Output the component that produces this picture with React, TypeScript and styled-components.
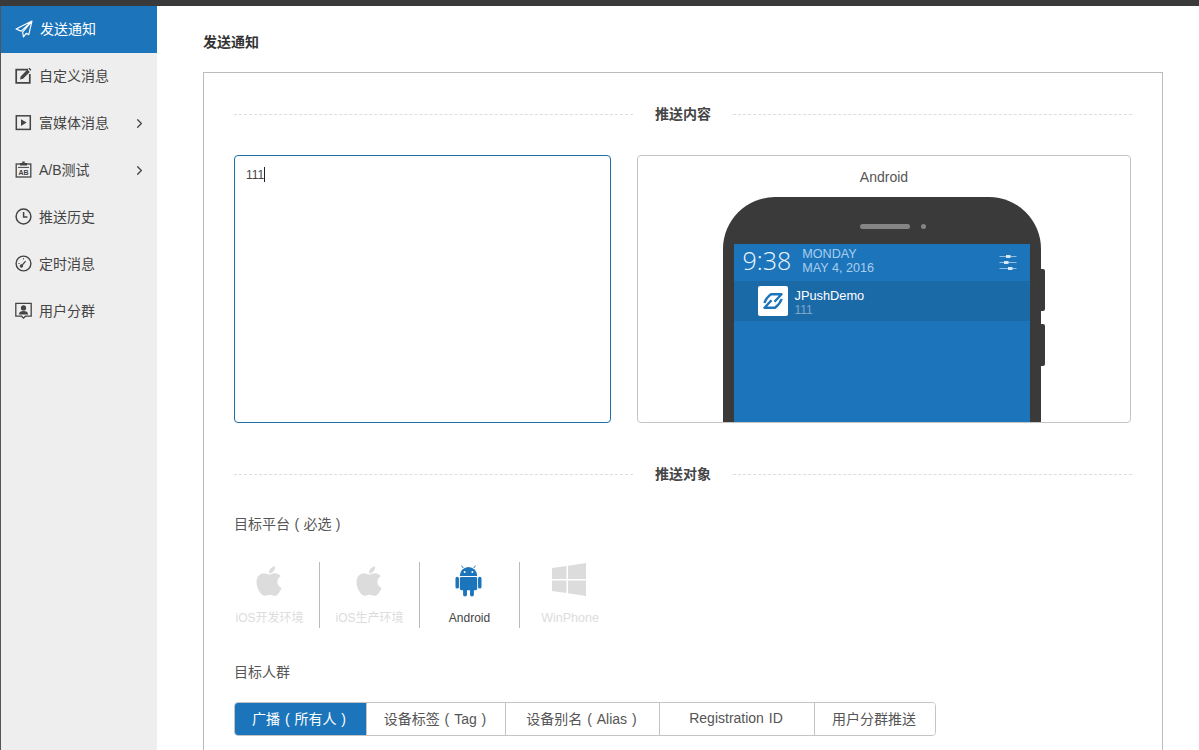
import styled, { createGlobalStyle } from "styled-components";
import { ChevronRight } from "lucide-react";
import { FaApple } from "react-icons/fa";
import type { ReactNode } from "react";

const GlobalStyle = createGlobalStyle`
  html, body {
    margin: 0;
    padding: 0;
    height: 100%;
    overflow: hidden;
    background: #fff;
  }
  body {
    font-family: "Liberation Sans", "Noto Sans CJK SC", Arial, sans-serif;
    color: #444;
  }
  * { box-sizing: border-box; }
`;

const Page = styled.div`
  height: 750px;
  overflow: hidden;
  display: flex;
  flex-direction: column;
`;

const TopBar = styled.div`
  height: 6px;
  flex: none;
  background: #3a3a3a;
`;

const Body = styled.div`
  flex: 1;
  display: flex;
  min-height: 0;
`;

const Sidebar = styled.nav`
  width: 157px;
  flex: none;
  background: #eeeeee;
  border-left: 1px solid #555;
`;

const NavItem = styled.div<{ $active?: boolean }>`
  height: 47px;
  display: flex;
  align-items: center;
  padding: 0 0 2px 14px;
  font-size: 14px;
  color: ${(p) => (p.$active ? "#fff" : "#444")};
  background: ${(p) => (p.$active ? "#1c75bb" : "transparent")};
  svg { flex: none; }
`;

const NavLabel = styled.span`
  margin: 0 0 2px 7px;
  flex: 1;
  white-space: nowrap;
`;

const NavArrow = styled(ChevronRight)`
  margin: 2px 10px 0 0;
  color: #444;
`;

const Main = styled.main`
  flex: 1;
  padding-left: 46px;
  min-width: 0;
`;

const PageTitle = styled.h1`
  margin: 0;
  height: 66px;
  display: flex;
  align-items: center;
  padding-top: 4px;
  font-size: 14px;
  font-weight: bold;
  color: #333;
`;

const Card = styled.section`
  width: 960px;
  border: 1px solid #bbb;
  padding: 31px 30px 40px;
`;

const Divider = styled.div<{ $gapTop?: number }>`
  height: 20px;
  display: flex;
  align-items: center;
  margin-top: ${(p) => p.$gapTop ?? 0}px;
  font-size: 14px;
  font-weight: bold;
  color: #444;
  &::before, &::after {
    content: "";
    flex: 1;
    border-top: 1px dashed #ddd;
  }
  span { padding: 0 22px; margin-bottom: 2px; }
`;

const ContentRow = styled.div`
  display: grid;
  grid-template-columns: 377px 494px;
  gap: 26px;
  margin-top: 31px;
  height: 268px;
`;

const MessageBox = styled.div`
  border: 1px solid #1c6ea4;
  border-radius: 4px;
  padding: 11px 11px;
  font-size: 12px;
  line-height: 16px;
  color: #444;
`;

const Caret = styled.span`
  display: inline-block;
  width: 1px;
  height: 15px;
  background: #222;
  vertical-align: -3px;
`;

const Preview = styled.div`
  border: 1px solid #c4c4c4;
  border-radius: 4px;
  overflow: hidden;
  display: flex;
  flex-direction: column;
  align-items: center;
`;

const PreviewTitle = styled.div`
  height: 41px;
  flex: none;
  display: flex;
  align-items: center;
  font-size: 14px;
  color: #555;
`;

const Phone = styled.div`
  position: relative;
  width: 318px;
  height: 240px;
  flex: none;
  padding: 0 11px;
  background: #3a3a3a;
  border-radius: 52px 52px 0 0;
  margin-right: 5px;
`;

const SideKey = styled.div<{ $top: number }>`
  position: absolute;
  right: -4px;
  top: ${(p) => p.$top}px;
  width: 4px;
  height: 42px;
  background: #3a3a3a;
  border-radius: 0 2px 2px 0;
`;

const PhoneHead = styled.div`
  height: 47px;
  display: flex;
  align-items: center;
  justify-content: center;
  gap: 11px;
  padding: 12px 0 0 13px;
  margin-left: 10px;
`;

const Speaker = styled.div`
  width: 50px;
  height: 5px;
  border-radius: 3px;
  background: #858585;
`;

const Camera = styled.div`
  width: 5px;
  height: 5px;
  border-radius: 50%;
  background: #858585;
`;

const Screen = styled.div`
  height: 193px;
  background: #1c75bb;
`;

const StatusBar = styled.div`
  height: 37px;
  display: flex;
  align-items: center;
  padding: 0 13px 0 9px;
`;

const Clock = styled.div`
  font-size: 25px;
  line-height: 1;
  margin-bottom: 4px;
  color: #eef5fb;
  font-family: "Open Sans", "Liberation Sans", sans-serif;
  font-weight: 300;
`;

const DateText = styled.div`
  margin: 0 0 4px 11px;
  flex: 1;
  font-size: 12.6px;
  line-height: 14px;
  color: #a8cdec;
`;

const Notice = styled.div`
  height: 40px;
  display: flex;
  align-items: center;
  padding-left: 24px;
  background: #1b6aa8;
`;

const AppLogo = styled.div`
  width: 30px;
  height: 30px;
  background: #fff;
  border-radius: 2px;
  display: flex;
  align-items: center;
  justify-content: center;
`;

const NoticeText = styled.div`
  margin-left: 7px;
  padding-top: 4px;
`;

const NoticeTitle = styled.div`
  font-size: 12.8px;
  line-height: 14px;
  color: #fff;
`;

const NoticeBody = styled.div`
  font-size: 12px;
  line-height: 13px;
  margin-top: 1px;
  color: #7ea7c8;
`;

const FieldLabel = styled.div<{ $top: number }>`
  height: 20px;
  line-height: 20px;
  margin-top: ${(p) => p.$top}px;
  font-size: 14px;
  word-spacing: 0.5px;
  white-space: pre;
  color: #555;
`;

const Platforms = styled.div`
  display: flex;
  margin: 28px 0 0 -14px;
  height: 66px;
`;

const Platform = styled.div<{ $on?: boolean }>`
  width: 100px;
  height: 66px;
  display: flex;
  flex-direction: column;
  align-items: center;
  border-right: 1px solid #bbb;
  font-size: 12px;
  white-space: nowrap;
  color: ${(p) => (p.$on ? "#444" : "#dcdcdc")};
  &:last-child { border-right: none; }
`;

const PlatformIcon = styled.div`
  height: 40px;
  display: flex;
  align-items: center;
  justify-content: center;
  padding: 0 2px 3px 0;
`;

const PlatformName = styled.div<{ $low?: boolean }>`
  margin-top: ${(p) => (p.$low ? 8 : 6)}px;
  line-height: 20px;
  font-size: ${(p) => (p.$low ? 12.5 : 12)}px;
`;

const TargetGroup = styled.div`
  display: inline-grid;
  grid-template-columns: 131px 139px 154px 155px 121px;
  height: 34px;
  margin-top: 20px;
  border: 1px solid #c4c4c4;
  border-radius: 4px;
  overflow: hidden;
`;

const TargetButton = styled.div<{ $active?: boolean }>`
  display: flex;
  align-items: center;
  justify-content: center;
  padding: 0 2px 2px 0;
  font-size: 14px;
  word-spacing: 1px;
  white-space: pre;
  color: ${(p) => (p.$active ? "#fff" : "#555")};
  background: ${(p) => (p.$active ? "#1c75bb" : "#fff")};
  border-left: ${(p) => (p.$active ? "none" : "1px solid #c4c4c4")};
  &:first-child { border-left: none; margin: -1px 0 -1px -1px; }
`;

const SendIcon = () => (
  <svg width="18" height="18" viewBox="0 0 17 17" fill="none" stroke="currentColor" strokeWidth="1.1" strokeLinejoin="round">
    <path d="M16 1 1 8.5l4.8 2L16 1 7.2 11.4 8 16l2.6-3.4 2.4 1.2z" />
  </svg>
);

const EditIcon = () => (
  <svg width="17" height="17" viewBox="0 0 17 17" fill="none">
    <path d="M13 2.6H1.2v13.2h13.6V7" stroke="#444" strokeWidth="1.7" />
    <path d="M5 12.4 5.7 9.4 12.4 2.6l2.4 2.4-6.8 6.8z" fill="#444" />
    <path d="M13.3 1.7 14.4.7l2 2-1 1.1z" fill="#444" />
  </svg>
);

const PlayIcon = () => (
  <svg width="17" height="17" viewBox="0 0 17 17" fill="none">
    <rect x="1.3" y="1.8" width="14" height="13.6" stroke="#444" strokeWidth="1.5" />
    <path d="M6 5.2v6.8l5.6-3.4z" fill="#444" />
  </svg>
);

const AbIcon = () => (
  <svg width="17" height="17" viewBox="0 0 17 17" fill="none">
    <rect x="1.2" y="3" width="14.6" height="13" stroke="#444" strokeWidth="1.3" />
    <path d="M5 4.4V2h2.3V.6h2.4V2H12v2.4z" fill="#444" />
    <path d="M3 6.4h11" stroke="#444" strokeWidth="1" />
    <text x="8.5" y="13.6" textAnchor="middle" fontSize="7" fontWeight="bold" fill="#444" fontFamily="Liberation Sans">AB</text>
  </svg>
);

const ClockIcon = () => (
  <svg width="17" height="17" viewBox="0 0 17 17" fill="none" stroke="#444" strokeWidth="1.5">
    <circle cx="8.5" cy="8.5" r="7.4" />
    <path d="M8.6 4v5h3.8" />
  </svg>
);

const GaugeIcon = () => (
  <svg width="17" height="17" viewBox="0 0 17 17" fill="none" stroke="#444" strokeWidth="1.4">
    <circle cx="8.5" cy="8.5" r="7.4" />
    <path d="M6.4 11 10.6 6.2" strokeWidth="1.2" />
    <circle cx="6.4" cy="11" r="1" fill="#444" />
    <path d="M3.4 8.5h1.2M8.5 3.2v1.2" strokeWidth="1" />
  </svg>
);

const UserIcon = () => (
  <svg width="17" height="17" viewBox="0 0 17 17" fill="none">
    <path d="M.8 1.4h15.4v12.8h-5.8l-1.9 1.9-1.9-1.9H.8z" stroke="#444" strokeWidth="1.3" />
    <circle cx="8.5" cy="5.9" r="2.6" fill="#444" />
    <path d="M3.8 12.4c.3-2.6 2.1-3.4 4.7-3.4s4.4.8 4.7 3.4z" fill="#444" />
  </svg>
);

const SlidersIcon = () => (
  <svg width="18" height="16" viewBox="0 0 18 16" fill="none" stroke="#8fbde2" strokeWidth="1">
    <path d="M.5 1.5h17M.5 7.5h17M.5 13.5h17" />
    <rect x="7" y="0" width="4.5" height="3" fill="#d6e7f5" stroke="none" />
    <rect x="5" y="6" width="4.5" height="3" fill="#d6e7f5" stroke="none" />
    <rect x="9" y="12" width="4.5" height="3" fill="#d6e7f5" stroke="none" />
  </svg>
);

const JPushLogo = () => (
  <svg width="24" height="24" viewBox="0 0 24 24" fill="none" stroke="#1c75bb" strokeWidth="2.4" strokeLinejoin="round">
    <path d="M3.4 14Q5 9 10 5.2H20.5L13.5 12.8" />
    <path d="M20.6 10Q19 15 14 18.8H3.5L10.5 11.2" />
  </svg>
);

const AndroidIcon = () => (
  <svg width="27" height="32" viewBox="0 0 28 33" fill="#1c75bb">
    <path d="M5 11a9 9 0 0 1 18 0v.4H5z" />
    <path d="M8.6 3 6.8.6M19.4 3 21.2.6" stroke="#1c75bb" strokeWidth="1" />
    <rect x="5" y="12.4" width="18" height="13.6" rx="1.5" />
    <rect x="0.5" y="12" width="3.6" height="12.4" rx="1.8" />
    <rect x="23.9" y="12" width="3.6" height="12.4" rx="1.8" />
    <rect x="8.4" y="24" width="4" height="8.6" rx="2" />
    <rect x="15.6" y="24" width="4" height="8.6" rx="2" />
    <circle cx="10" cy="7.2" r="1" fill="#fff" />
    <circle cx="18" cy="7.2" r="1" fill="#fff" />
  </svg>
);

const WindowsIcon = () => (
  <svg width="34" height="33" viewBox="0 0 34 33" fill="#dcdcdc">
    <path d="M0 5 14.5 3v13H0zM16 2.7 34 0v16H16zM0 17.5h14.5V30L0 28zM16 17.5h18V33l-18-2.7z" />
  </svg>
);

type NavEntry = { label: string; icon: ReactNode; active?: boolean; arrow?: boolean };

const navItems: NavEntry[] = [
  { label: "发送通知", icon: <SendIcon />, active: true },
  { label: "自定义消息", icon: <EditIcon /> },
  { label: "富媒体消息", icon: <PlayIcon />, arrow: true },
  { label: "A/B测试", icon: <AbIcon />, arrow: true },
  { label: "推送历史", icon: <ClockIcon /> },
  { label: "定时消息", icon: <GaugeIcon /> },
  { label: "用户分群", icon: <UserIcon /> },
];

const targets = ["广播 ( 所有人 )", "设备标签 ( Tag )", "设备别名 ( Alias )", "Registration ID", "用户分群推送"];

export default function App() {
  return (
    <Page>
      <GlobalStyle />
      <TopBar />
      <Body>
        <Sidebar>
          {navItems.map((item) => (
            <NavItem key={item.label} $active={item.active}>
              {item.icon}
              <NavLabel>{item.label}</NavLabel>
              {item.arrow && <NavArrow size={15} />}
            </NavItem>
          ))}
        </Sidebar>
        <Main>
          <PageTitle>发送通知</PageTitle>
          <Card>
            <Divider><span>推送内容</span></Divider>
            <ContentRow>
              <MessageBox>111<Caret /></MessageBox>
              <Preview>
                <PreviewTitle>Android</PreviewTitle>
                <Phone>
                  <SideKey $top={72} />
                  <SideKey $top={127} />
                  <PhoneHead>
                    <Speaker />
                    <Camera />
                  </PhoneHead>
                  <Screen>
                    <StatusBar>
                      <Clock>9:38</Clock>
                      <DateText>MONDAY<br />MAY 4, 2016</DateText>
                      <SlidersIcon />
                    </StatusBar>
                    <Notice>
                      <AppLogo><JPushLogo /></AppLogo>
                      <NoticeText>
                        <NoticeTitle>JPushDemo</NoticeTitle>
                        <NoticeBody>111</NoticeBody>
                      </NoticeText>
                    </Notice>
                  </Screen>
                </Phone>
              </Preview>
            </ContentRow>
            <Divider $gapTop={41}><span>推送对象</span></Divider>
            <FieldLabel $top={30}>目标平台 ( 必选 )</FieldLabel>
            <Platforms>
              <Platform>
                <PlatformIcon><FaApple size={34} color="#dcdcdc" /></PlatformIcon>
                <PlatformName>iOS开发环境</PlatformName>
              </Platform>
              <Platform>
                <PlatformIcon><FaApple size={34} color="#dcdcdc" /></PlatformIcon>
                <PlatformName>iOS生产环境</PlatformName>
              </Platform>
              <Platform $on>
                <PlatformIcon><AndroidIcon /></PlatformIcon>
                <PlatformName>Android</PlatformName>
              </Platform>
              <Platform>
                <PlatformIcon><WindowsIcon /></PlatformIcon>
                <PlatformName $low>WinPhone</PlatformName>
              </Platform>
            </Platforms>
            <FieldLabel $top={34}>目标人群</FieldLabel>
            <TargetGroup>
              {targets.map((t, i) => (
                <TargetButton key={t} $active={i === 0}>{t}</TargetButton>
              ))}
            </TargetGroup>
          </Card>
        </Main>
      </Body>
    </Page>
  );
}
